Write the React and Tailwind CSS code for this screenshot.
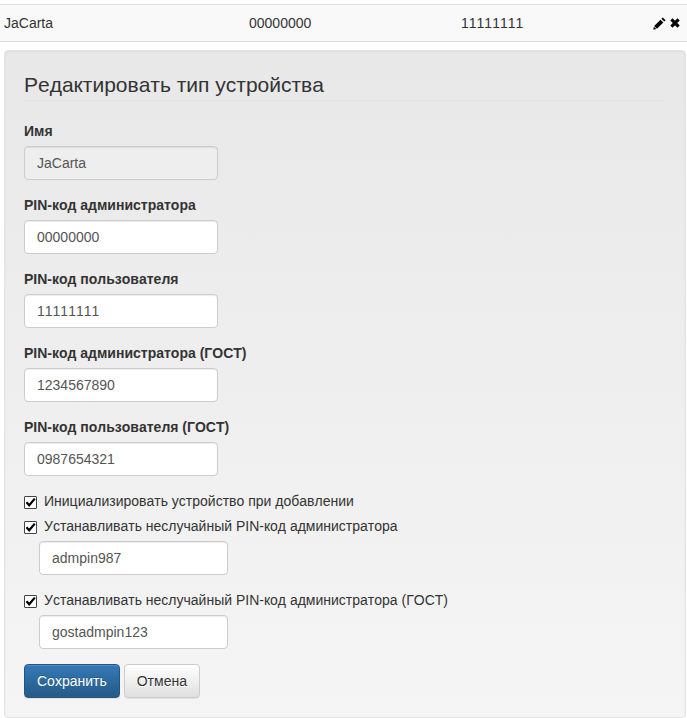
import React from 'react';

const font = { fontFamily: '"Liberation Sans", Arial, sans-serif' };

const Field = ({ label, value, disabled }) => (
  <div className="mb-[15px]">
    <label className="block mb-[5px] text-sm leading-5 font-bold text-[#333]">{label}</label>
    <input
      type="text"
      defaultValue={value}
      disabled={disabled}
      className={`block w-[194px] h-[34px] px-3 text-sm text-[#555] border border-[#ccc] rounded shadow-[inset_0_1px_1px_rgba(0,0,0,0.075)] ${disabled ? 'bg-[#eee]' : 'bg-white'}`}
    />
  </div>
);

const Check = ({ label }) => (
  <label className="flex items-center h-5 mb-[5px] text-sm leading-5 text-[#333]">
    <span className="flex items-center justify-center w-[13px] h-[13px] mt-[2px] mr-[7px] bg-white border border-[#444] rounded-[1px]">
      <svg width="11" height="11" viewBox="0 0 11 11" className="shrink-0">
        <path d="M1.5 5.2 L4.2 8.3 L9.8 1.6" fill="none" stroke="#000" strokeWidth="2.2" />
      </svg>
    </span>
    {label}
  </label>
);

const SubInput = ({ value }) => (
  <div className="pl-[15px] mb-[15px] mt-[5px]">
    <input
      type="text"
      defaultValue={value}
      className="block w-[189px] h-[34px] px-3 text-sm text-[#555] bg-white border border-[#ccc] rounded shadow-[inset_0_1px_1px_rgba(0,0,0,0.075)]"
    />
  </div>
);

export default function App() {
  return (
    <div style={font} className="w-[687px] h-[718px] overflow-hidden bg-white text-sm text-[#333] [font-kerning:none]">
      <div className="pt-1">
        {/* Строка таблицы */}
        <div className="flex items-center h-[38px] pl-1 bg-[#f9f9f9] border-t border-b border-[#ddd]">
          <div className="w-[245px]">JaCarta</div>
          <div className="w-[212px]">00000000</div>
          <div className="w-[192px]">11111111</div>
          <div className="flex items-center gap-[4px]">
            <svg width="13" height="13" viewBox="0 0 13 13" fill="#000">
              <path d="M9.8 0.4 L12.6 3.2 L11.2 4.6 L8.4 1.8 Z" />
              <path d="M7.5 2.7 L10.3 5.5 L4 11.8 L1.2 9 Z" />
              <path d="M0.9 9.7 L3.3 12.1 L0.3 12.7 Z" />
            </svg>
            <svg width="10" height="10" viewBox="0 0 10 10">
              <path d="M1.4 1.4 L8.6 8.6 M8.6 1.4 L1.4 8.6" stroke="#000" strokeWidth="3.2" fill="none" />
            </svg>
          </div>
        </div>

        {/* Форма */}
        <div className="mt-2 ml-1 mr-[1px] h-[668px] px-[19px] pt-[19px] border border-[#e3e3e3] rounded bg-gradient-to-b from-[#e8e8e8] to-[#f5f5f5] shadow-[inset_0_1px_3px_rgba(0,0,0,0.05)]">
          <div className="mb-5 h-[31px] text-[21px] leading-[29px] text-[#333] border-b border-[#e5e5e5]">
            Редактировать тип устройства
          </div>
          <Field label="Имя" value="JaCarta" disabled />
          <Field label="PIN-код администратора" value="00000000" />
          <Field label="PIN-код пользователя" value="11111111" />
          <Field label="PIN-код администратора (ГОСТ)" value="1234567890" />
          <Field label="PIN-код пользователя (ГОСТ)" value="0987654321" />
          <Check label="Инициализировать устройство при добавлении" />
          <Check label="Устанавливать неслучайный PIN-код администратора" />
          <SubInput value="admpin987" />
          <Check label="Устанавливать неслучайный PIN-код администратора (ГОСТ)" />
          <SubInput value="gostadmpin123" />
          <div className="flex gap-1">
            <button className="h-[34px] px-3 text-sm text-white rounded border border-[#245580] bg-gradient-to-b from-[#337ab7] to-[#265a88] [text-shadow:0_-1px_0_rgba(0,0,0,0.2)] shadow-[inset_0_1px_0_rgba(255,255,255,0.15),0_1px_1px_rgba(0,0,0,0.075)]">
              Сохранить
            </button>
            <button className="h-[34px] px-3 text-sm text-[#333] rounded border border-[#ccc] bg-gradient-to-b from-white to-[#e0e0e0] [text-shadow:0_1px_0_#fff] shadow-[inset_0_1px_0_rgba(255,255,255,0.15),0_1px_1px_rgba(0,0,0,0.075)]">
              Отмена
            </button>
          </div>
        </div>
      </div>
    </div>
  );
}
